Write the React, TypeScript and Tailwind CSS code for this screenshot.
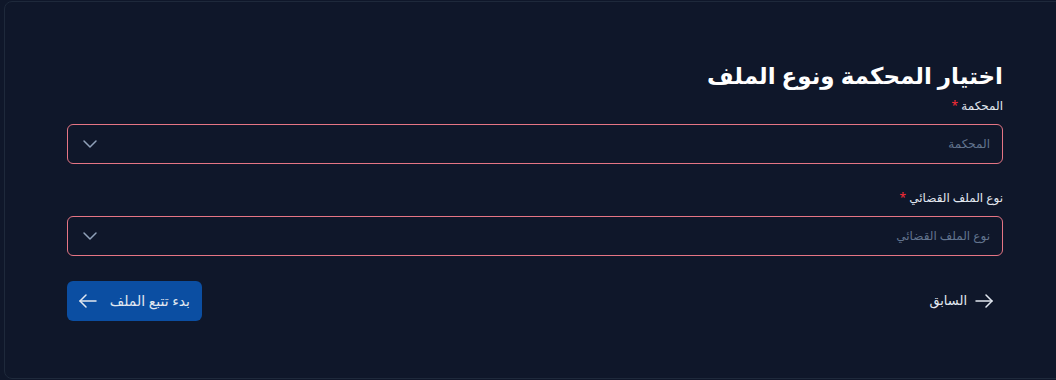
import { ChevronDown } from 'lucide-react';

const ArrowLeft = () => (
  <svg width="18" height="14" viewBox="0 0 18 14" fill="none" stroke="currentColor" strokeWidth="1.5" strokeLinecap="round" strokeLinejoin="round">
    <path d="M17 7H1" />
    <path d="M7 1L1 7l6 6" />
  </svg>
);

const ArrowRight = () => (
  <svg width="18" height="14" viewBox="0 0 18 14" fill="none" stroke="currentColor" strokeWidth="1.5" strokeLinecap="round" strokeLinejoin="round">
    <path d="M1 7h16" />
    <path d="M11 1l6 6-6 6" />
  </svg>
);

const SelectField = ({ label, placeholder }: { label: string; placeholder: string }) => (
  <div className="flex flex-col gap-2">
    <label className="text-[12px] leading-5 text-slate-200">
      {label} <span className="text-red-500">*</span>
    </label>
    <button
      type="button"
      className="flex h-10 w-full items-center justify-between rounded-md border border-[#e57584] bg-[#0f172a] pl-[10px] pr-3 text-[12px] text-slate-500"
    >
      <span>{placeholder}</span>
      <ChevronDown className="h-6 w-6 text-slate-400" strokeWidth={1.5} />
    </button>
  </div>
);

export default function App() {
  return (
    <div
      className="h-[380px] w-[1056px] overflow-hidden bg-[#0f172a]"
      style={{ fontFamily: '"Noto Sans", "DejaVu Sans", sans-serif' }}
    >
      <div
        dir="rtl"
        className="ml-[4px] mt-[1px] h-[378px] w-[1062px] rounded-lg border border-[#1e293b] bg-[#0f172a] px-[62px] pt-[57px]"
      >
        <h2 className="mb-[5px] text-[23px] font-bold leading-8 text-white">اختيار المحكمة ونوع الملف</h2>
        <div className="flex flex-col gap-6">
          <SelectField label="المحكمة" placeholder="المحكمة" />
          <SelectField label="نوع الملف القضائي" placeholder="نوع الملف القضائي" />
        </div>
        <div className="mt-[25px] flex items-center justify-between">
          <button type="button" className="flex h-10 items-center gap-2 rounded-md px-2.5 text-[13px] text-slate-200">
            <ArrowRight />
            <span>السابق</span>
          </button>
          <button
            type="button"
            className="flex h-10 w-[135px] items-center justify-between whitespace-nowrap rounded-md bg-[#0b4ea2] px-3 text-sm text-slate-200"
          >
            <span>بدء تتبع الملف</span>
            <ArrowLeft />
          </button>
        </div>
      </div>
    </div>
  );
}
